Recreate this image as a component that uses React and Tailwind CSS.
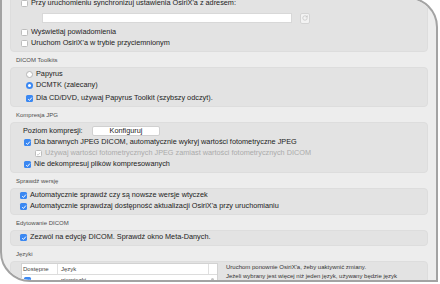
import { RotateCw } from 'lucide-react'

function Check({ on, dim }) {
  return (
    <span
      className={
        on && !dim
          ? 'w-[7px] h-[7px] rounded-[1.5px] flex items-center justify-center shrink-0 bg-[#3b88f2]'
          : 'w-[7px] h-[7px] rounded-[1.5px] flex items-center justify-center shrink-0 bg-white border border-[#bdbdbd]'
      }
    >
      {on && (
        <svg viewBox="0 0 8 8" className="w-[6px] h-[6px]">
          <path d="M1.6 4.3 L3.3 5.9 L6.5 2.1" fill="none" stroke={dim ? '#c4c4c4' : '#ffffff'} strokeWidth="1.3" />
        </svg>
      )}
    </span>
  )
}

function Radio({ on }) {
  if (on) {
    return (
      <span className="w-[7px] h-[7px] rounded-full bg-[#3b88f2] flex items-center justify-center shrink-0">
        <span className="w-[3px] h-[3px] rounded-full bg-white" />
      </span>
    )
  }
  return <span className="w-[7px] h-[7px] rounded-full bg-white border border-[#b5b5b5] shrink-0" />
}

function Row({ children, className = '' }) {
  return <div className={'flex items-center h-[11px] gap-[3px] whitespace-nowrap ' + className}>{children}</div>
}

function Label({ children }) {
  return (
    <div className="h-[15px] pt-[1px] pl-[6px] flex items-center text-[6px] text-[#4d4d4d] whitespace-nowrap">
      {children}
    </div>
  )
}

export default function App() {
  return (
    <div className="w-[440px] h-[284px] bg-white overflow-hidden font-['Liberation_Sans',Arial,sans-serif] text-[7.3px] text-[#222222]">
      <div className="-mt-[3px] w-[438px] h-[285px] border-2 border-[#a3a3a3] rounded-tr-[30px] rounded-bl-[30px] bg-[#ededed] overflow-hidden px-[8px]">

        {/* synchronizacja / powiadomienia */}
        <div className="-mt-[10px] rounded-[4px] bg-[#e3e3e3] border border-[#dddddd] pt-[8px] pb-[2px] pl-[10px]">
          <Row>
            <Check />
            <span>Przy uruchomieniu synchronizuj ustawienia OsiriX'a z adresem:</span>
          </Row>
          <div className="flex items-center mt-[4px] h-[10px]">
            <div className="ml-[21px] w-[250px] h-[10px] bg-white border border-[#d8d8d8]" />
            <div className="ml-[8px] w-[10px] h-[11px] rounded-[2px] bg-[#f3f3f3] border border-[#d4d4d4] flex items-center justify-center">
              <RotateCw size={6} strokeWidth={2} className="text-[#b0b0b0]" />
            </div>
          </div>
          <Row className="mt-[4px]">
            <Check />
            <span>Wyświetlaj powiadomienia</span>
          </Row>
          <Row>
            <Check />
            <span>Uruchom OsiriX'a w trybie przyciemnionym</span>
          </Row>
        </div>

        <Label>DICOM Toolkits</Label>
        <div className="rounded-[4px] bg-[#e3e3e3] border border-[#dddddd] pt-[1px] pb-[2px] pl-[15px]">
          <Row>
            <Radio />
            <span>Papyrus</span>
          </Row>
          <Row>
            <Radio on />
            <span>DCMTK (zalecany)</span>
          </Row>
          <Row className="mt-[2px] gap-[2.5px]">
            <Check on />
            <span>Dla CD/DVD, używaj Papyrus Toolkit (szybszy odczyt).</span>
          </Row>
        </div>

        <Label>Kompresja JPG</Label>
        <div className="rounded-[4px] bg-[#e3e3e3] border border-[#dddddd] pt-[3px] pb-[2px] pl-[12px]">
          <div className="flex items-center h-[10px] whitespace-nowrap">
            <span className="w-[69px]">Poziom kompresji:</span>
            <div className="w-[68px] h-[10px] rounded-[2px] bg-white border border-[#d0d0d0] flex items-center justify-center">
              Konfiguruj
            </div>
          </div>
          <Row className="mt-[1px] ml-[1px] gap-[2px]">
            <Check on />
            <span>Dla barwnych JPEG DICOM, automatycznie wykryj wartości fotometryczne JPEG</span>
          </Row>
          <Row className="ml-[12px] gap-[1px] text-[#ababab]">
            <Check on dim />
            <span>Używaj wartości fotometrycznych JPEG zamiast wartości fotometrycznych DICOM</span>
          </Row>
          <Row className="ml-[1px] gap-[2px]">
            <Check on />
            <span>Nie dekompresuj plików kompresowanych</span>
          </Row>
        </div>

        <Label>Sprawdź wersję</Label>
        <div className="rounded-[4px] bg-[#e3e3e3] border border-[#dddddd] pt-[1px] pb-[2px] pl-[9px]">
          <Row className="gap-[2px]">
            <Check on />
            <span>Automatycznie sprawdź czy są nowsze wersje wtyczek</span>
          </Row>
          <Row className="gap-[2px]">
            <Check on />
            <span>Automatycznie sprawdzaj dostępność aktualizacji OsiriX'a przy uruchomianiu</span>
          </Row>
        </div>

        <Label>Edytowanie DICOM</Label>
        <div className="rounded-[4px] bg-[#e3e3e3] border border-[#dddddd] pt-[1px] pb-[2px] pl-[9px]">
          <Row className="gap-[2px]">
            <Check on />
            <span>Zezwól na edycję DICOM. Sprawdź okno Meta-Danych.</span>
          </Row>
        </div>

        <Label>Języki</Label>
        <div className="rounded-[4px] bg-[#e3e3e3] border border-[#dddddd] pt-[1px] pl-[10px] flex gap-[8px] h-[40px]">
          <div className="w-[197px] bg-white border border-[#d2d2d2] text-[6px]">
            <div className="flex h-[11px] border-b border-[#dcdcdc] text-[#444444]">
              <div className="w-[36px] pl-[1px] flex items-center border-r border-[#e0e0e0]">Dostępne</div>
              <div className="flex-1 pl-[3px] flex items-center">Język</div>
              <div className="w-[9px] border-l border-[#e0e0e0]" />
            </div>
            <div className="flex h-[11px] items-center">
              <div className="w-[36px] pl-[2px] flex items-center">
                <Check on />
              </div>
              <div className="flex-1 pl-[3px]">niemiecki</div>
              <div className="w-[3px] h-[8px] mt-[3px] mr-[3px] rounded-full bg-[#c4c4c4]" />
            </div>
          </div>
          <div className="text-[6px] leading-[9px] text-[#333333] whitespace-nowrap">
            <div>Uruchom ponownie OsiriX'a, żeby uaktywnić zmiany.</div>
            <div>Jeżeli wybrany jest więcej niż jeden język, używany będzie język</div>
            <div>systemu MacOS.</div>
          </div>
        </div>
      </div>
    </div>
  )
}
